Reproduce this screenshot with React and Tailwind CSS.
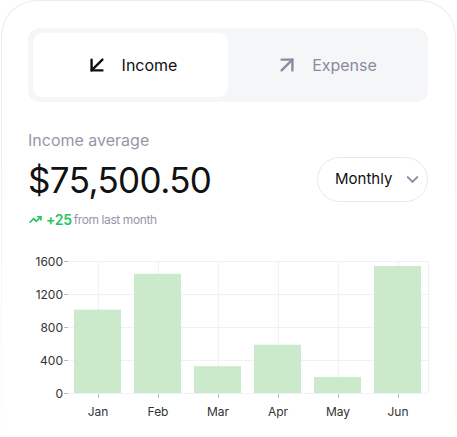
import React from "react";
import { ArrowDownLeft, ArrowUpRight, ChevronDown, TrendingUp } from "lucide-react";

const data = [
  { m: "Jan", v: 1010 },
  { m: "Feb", v: 1445 },
  { m: "Mar", v: 325 },
  { m: "Apr", v: 585 },
  { m: "May", v: 195 },
  { m: "Jun", v: 1540 },
];

function Chart() {
  // plot area
  const x0 = 66, x1 = 426, y0 = 13, y1 = 145;
  const band = (x1 - x0) / data.length;
  const y = (v) => y1 - (v / 1600) * (y1 - y0);
  return (
    <svg width="457" height="175" className="block" style={{ fontFamily: "Inter, sans-serif" }}>
      {[0, 400, 800, 1200, 1600].map((t) => (
        <g key={t}>
          <line x1={x0} x2={x1} y1={y(t) + 0.5} y2={y(t) + 0.5} stroke="#f1f1f5" />
          <line x1={x0 - 4} x2={x0} y1={y(t) + 0.5} y2={y(t) + 0.5} stroke="#b8b8c0" />
          <text x={x0 - 5} y={y(t) + 4.5} textAnchor="end" fontSize="12" fill="#333">{t}</text>
        </g>
      ))}
      {data.map((d, i) => {
        const cx = x0 + band * i + band / 2;
        return <line key={d.m} x1={cx + 0.5} x2={cx + 0.5} y1={y0} y2={y1} stroke="#f1f1f5" />;
      })}
      <line x1={x1 + 0.5} x2={x1 + 0.5} y1={y0} y2={y1} stroke="#f1f1f5" />
      {data.map((d, i) => {
        const cx = x0 + band * i + band / 2;
        return (
          <g key={d.m}>
            <rect x={cx - 24} y={y(d.v)} width="47" height={y1 - y(d.v)} fill="#cbe9cb" />
            <line x1={cx + 0.5} x2={cx + 0.5} y1={y1 + 1} y2={y1 + 5} stroke="#b8b8c0" />
            <text x={cx} y={y1 + 23} textAnchor="middle" fontSize="12" fill="#333">{d.m}</text>
          </g>
        );
      })}
    </svg>
  );
}

export default function App() {
  return (
    <div className="w-[457px] h-[437px] bg-white overflow-hidden" style={{ fontFamily: "Inter, 'Liberation Sans', sans-serif" }}>
      <div className="mx-px h-[470px] rounded-t-[36px] bg-gradient-to-b from-[#ebebf0] via-[#f3f3f6] to-white p-px">
        <div className="h-full rounded-t-[35px] bg-white pt-[27px]">
          {/* tabs */}
          <div className="ml-[26px] mr-[27px] flex rounded-[12px] bg-[#f5f6f8] p-[5px]">
            <div className="flex h-[64px] flex-1 items-center justify-center gap-[12px] rounded-[9px] bg-white text-[#111]">
              <ArrowDownLeft size={26} strokeWidth={2.2} />
              <span className="text-[16px]">Income</span>
            </div>
            <div className="flex h-[64px] flex-1 items-center justify-center gap-[12px] text-[#8d89a0]">
              <ArrowUpRight size={26} strokeWidth={2.2} />
              <span className="text-[16px]">Expense</span>
            </div>
          </div>

          {/* summary */}
          <div className="ml-[26px] mr-[27px] mt-[28px] flex items-end justify-between">
            <div>
              <div className="text-[16px] leading-5 text-[#9896a8]">Income average</div>
              <div className="mt-[10px] text-[35px] leading-10 tracking-[-0.6px] text-[#111]">$75,500.50</div>
            </div>
            <button className="mb-[-2px] flex h-[45px] w-[111px] items-center gap-[11px] rounded-full border border-[#e9e7f0] bg-white pl-[17px] text-[15px] text-[#111]">
              Monthly
              <ChevronDown size={19} strokeWidth={2.5} className="text-[#8d89a0]" />
            </button>
          </div>
          <div className="ml-[27px] mt-[9px] flex items-center text-[12px]">
            <TrendingUp size={13} strokeWidth={3} className="text-[#22c55e]" />
            <span className="ml-[4px] text-[14px] font-semibold tracking-[-0.3px] text-[#22c55e]">+25</span>
            <span className="ml-[2px] tracking-[-0.4px] text-[#9896a8]">from last month</span>
          </div>

          <div className="mt-[18px]">
            <Chart />
          </div>
        </div>
      </div>
    </div>
  );
}
